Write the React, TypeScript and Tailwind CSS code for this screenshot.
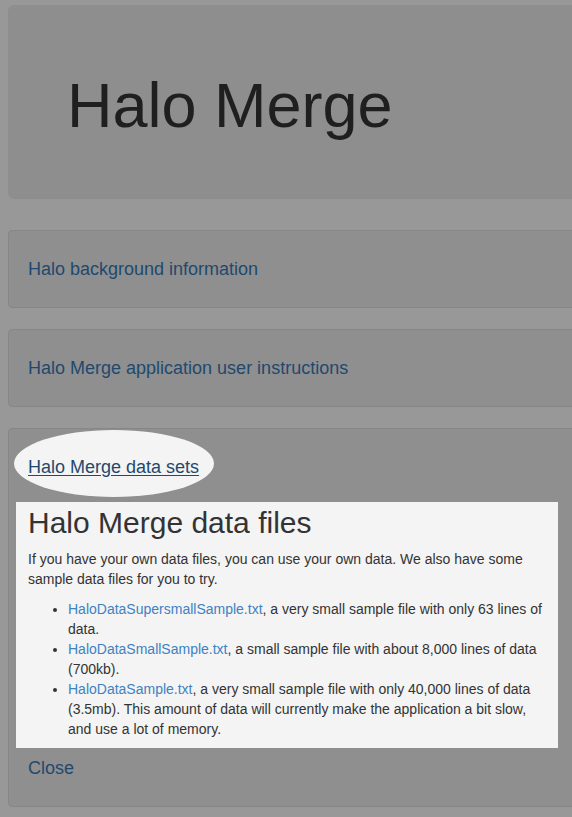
import React from "react"

const font = { fontFamily: '"Liberation Sans", Arial, Helvetica, sans-serif' }

const files = [
  {
    name: "HaloDataSupersmallSample.txt",
    text: ", a very small sample file with only 63 lines of data.",
  },
  {
    name: "HaloDataSmallSample.txt",
    text: ", a small sample file with about 8,000 lines of data (700kb).",
  },
  {
    name: "HaloDataSample.txt",
    text: ", a very small sample file with only 40,000 lines of data (3.5mb). This amount of data will currently make the application a bit slow, and use a lot of memory.",
  },
]

function Panel({ title }: { title: string }) {
  return (
    <div className="rounded-[4px] border border-[#868686] bg-[#8f8f8f] px-[19px] py-[28px]">
      <a href="#" className="block text-[18px] leading-[20px] text-[#1f496e]">
        {title}
      </a>
    </div>
  )
}

export default function App() {
  return (
    <div className="min-h-[817px] w-full overflow-hidden bg-[#989898]" style={font}>
      <div className="flex w-[620px] flex-col gap-[21px] pt-[5px] pl-2 pb-[10px]">
        <div className="mb-[10px] rounded-[6px] bg-[#8e8e8e] pt-[66px] pb-[59px] pl-[59px]">
          <h1 className="text-[63px] leading-[69px] text-[#1f1f1f]">Halo Merge</h1>
        </div>

        <Panel title="Halo background information" />
        <Panel title="Halo Merge application user instructions" />

        <div className="relative rounded-[4px] border border-[#868686] bg-[#8f8f8f] pt-[28px] pb-[28px]">
          <div className="absolute top-[1px] left-[5px] h-[67px] w-[200px] rounded-[50%] bg-[#f4f4f4]" />
          <a
            href="#"
            className="relative block pl-[19px] text-[18px] leading-[20px] text-[#1f496e] underline underline-offset-[2px]"
          >
            Halo Merge data sets
          </a>

          <div className="mt-[25px] ml-[7px] w-[542px] bg-[#f4f4f4] px-3 pt-1 pb-[9px] text-[14px] leading-[20px] text-[#333]">
            <h2 className="text-[30px] leading-[33px] text-[#333]">Halo Merge data files</h2>
            <p className="mt-[10px] mb-[10px]">
              If you have your own data files, you can use your own data. We also have some sample data files for you to try.
            </p>
            <ul className="list-disc pl-[40px]">
              {files.map((f) => (
                <li key={f.name}>
                  <a href="#" className="text-[#3d82c2]">
                    {f.name}
                  </a>
                  {f.text}
                </li>
              ))}
            </ul>
          </div>

          <a href="#" className="mt-[10px] block pl-[19px] text-[18px] leading-[20px] text-[#1f496e]">
            Close
          </a>
        </div>
      </div>
    </div>
  )
}
